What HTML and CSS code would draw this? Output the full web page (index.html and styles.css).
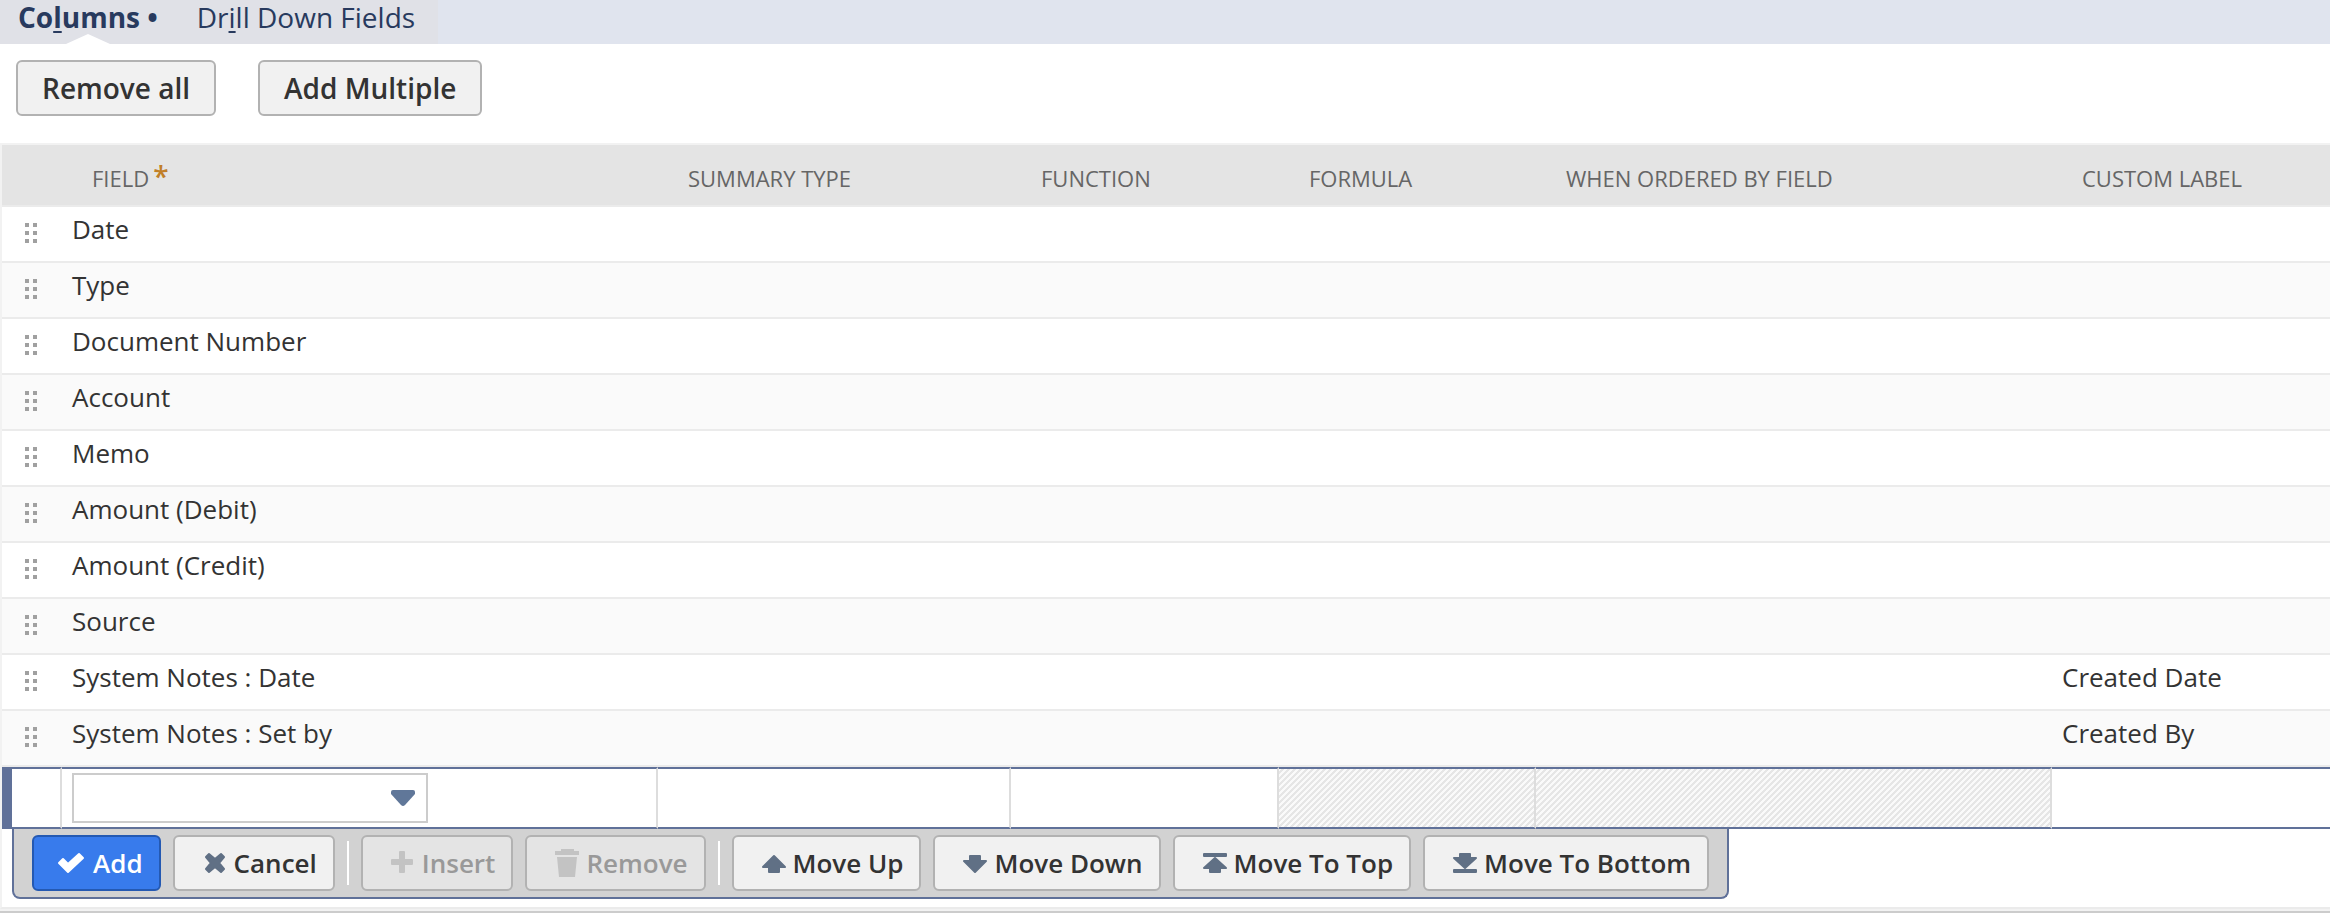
FILE: index.html
```html
<!DOCTYPE html>
<html lang="en">
<head>
    <meta charset="UTF-8">
    <meta name="viewport" content="width=device-width, initial-scale=1.0">
    <title>Saved Search Results</title>
    <link rel="stylesheet" href="styles.css">
</head>
<body>
    <nav class="tab-bar">
        <div class="tabs">
            <a class="tab active" href="#columns">Co<u>l</u>umns •</a>
            <a class="tab" href="#drilldown">Dr<u>i</u>ll Down Fields</a>
        </div>
    </nav>

    <div class="actions">
        <button type="button" class="btn btn-large">Remove all</button>
        <button type="button" class="btn btn-large">Add Multiple</button>
    </div>

    <!-- one grip icon shared by all rows -->
    <svg class="defs" aria-hidden="true">
        <symbol id="grip" viewBox="0 0 12 20">
            <path d="M0 0h4v4H0zM8 0h4v4H8zM0 8h4v4H0zM8 8h4v4H8zM0 16h4v4H0zM8 16h4v4H8z"/>
        </symbol>
    </svg>

    <div class="sublist" id="columns">
        <table class="fields">
            <colgroup>
                <col class="col-grip">
                <col class="col-field">
                <col class="col-summary">
                <col class="col-function">
                <col class="col-formula">
                <col class="col-order">
                <col>
            </colgroup>
            <thead>
                <tr>
                    <th></th>
                    <th>Field<span class="required">*</span></th>
                    <th>Summary Type</th>
                    <th>Function</th>
                    <th>Formula</th>
                    <th>When Ordered By Field</th>
                    <th>Custom Label</th>
                </tr>
            </thead>
            <tbody>
                <tr><td><svg class="grip"><use href="#grip"/></svg></td><td>Date</td><td></td><td></td><td></td><td></td><td></td></tr>
                <tr><td><svg class="grip"><use href="#grip"/></svg></td><td>Type</td><td></td><td></td><td></td><td></td><td></td></tr>
                <tr><td><svg class="grip"><use href="#grip"/></svg></td><td>Document Number</td><td></td><td></td><td></td><td></td><td></td></tr>
                <tr><td><svg class="grip"><use href="#grip"/></svg></td><td>Account</td><td></td><td></td><td></td><td></td><td></td></tr>
                <tr><td><svg class="grip"><use href="#grip"/></svg></td><td>Memo</td><td></td><td></td><td></td><td></td><td></td></tr>
                <tr><td><svg class="grip"><use href="#grip"/></svg></td><td>Amount (Debit)</td><td></td><td></td><td></td><td></td><td></td></tr>
                <tr><td><svg class="grip"><use href="#grip"/></svg></td><td>Amount (Credit)</td><td></td><td></td><td></td><td></td><td></td></tr>
                <tr><td><svg class="grip"><use href="#grip"/></svg></td><td>Source</td><td></td><td></td><td></td><td></td><td></td></tr>
                <tr><td><svg class="grip"><use href="#grip"/></svg></td><td>System Notes : Date</td><td></td><td></td><td></td><td></td><td>Created Date</td></tr>
                <tr><td><svg class="grip"><use href="#grip"/></svg></td><td>System Notes : Set by</td><td></td><td></td><td></td><td></td><td>Created By</td></tr>
                <tr class="edit-row">
                    <td></td>
                    <td>
                        <div class="dropdown">
                            <select name="field" aria-label="Field"><option></option></select>
                            <svg class="arrow" viewBox="0 0 24 16"><path d="M2 0h20q2 0 2 2v2L14 15q-2 2-4 0L0 4V2q0-2 2-2z"/></svg>
                        </div>
                    </td>
                    <td></td>
                    <td></td>
                    <td class="disabled"></td>
                    <td class="disabled"></td>
                    <td></td>
                </tr>
            </tbody>
        </table>

        <div class="toolbar">
            <button type="button" class="btn primary">
                <svg class="icon" viewBox="0 0 30 30"><path d="M0 15l4-4 5 5L20 6l4 4L9 24z"/></svg>Add
            </button>
            <button type="button" class="btn">
                <svg class="icon" viewBox="0 0 30 30"><path d="M9 6l6 5 6-5 3 3-5 6 5 6-3 3-6-5-6 5-3-3 5-6-5-6z"/></svg>Cancel
            </button>
            <span class="separator"></span>
            <button type="button" class="btn" disabled>
                <svg class="icon" viewBox="0 0 30 30"><path d="M12 4h4v8h8v4h-8v8h-4v-8H4v-4h8z"/></svg>Insert
            </button>
            <button type="button" class="btn" disabled>
                <svg class="icon trash" viewBox="0 0 30 30"><path d="M9 1h13v2h5v4H3V3h6zM5 9h20l-2 20H7z"/></svg>Remove
            </button>
            <span class="separator"></span>
            <button type="button" class="btn">
                <svg class="icon" viewBox="0 0 30 30"><path d="M15 8l11 11h-6v5H10v-5H4z"/></svg>Move Up
            </button>
            <button type="button" class="btn">
                <svg class="icon" viewBox="0 0 30 30"><path d="M15 24l11-11h-6V8H10v5H4z"/></svg>Move Down
            </button>
            <button type="button" class="btn">
                <svg class="icon" viewBox="0 0 30 30"><path d="M4 6h22v2H4zM15 10l11 10h-6v4H10v-4H4z"/></svg>Move To Top
            </button>
            <button type="button" class="btn">
                <svg class="icon" viewBox="0 0 30 30"><path d="M4 22h22v2H4zM15 20L4 10h6V6h10v4h6z"/></svg>Move To Bottom
            </button>
        </div>
    </div>
</body>
</html>
```

FILE: styles.css
```css
* {
    box-sizing: border-box;
}

body {
    margin: 0;
    background-color: #fff;
    color: #333;
    font-family: "Open Sans", sans-serif;
    font-size: 26px;
    line-height: 36px;
    border-bottom: 2px solid #ccc;
}

/* tabs */
.tab-bar {
    display: flex;
    height: 44px;
    background-color: #e0e4ee;
}

.tabs {
    display: flex;
    gap: 39px;
    padding: 0 23px 0 18px;
    background-color: #e0e1e7;
}

.tab {
    position: relative;
    color: #283a5e;
    font-size: 28px;
    line-height: 34px;
    text-decoration: none;
}

.tab u {
    text-underline-offset: 3px;
    text-decoration-thickness: 2px;
}

.tab.active {
    font-weight: bold;
}

.tab.active::after {
    content: "";
    position: absolute;
    left: 50%;
    bottom: 0;
    margin-left: -22px;
    border: 22px solid transparent;
    border-top: 0;
    border-bottom: 10px solid #fff;
}

/* buttons */
.btn {
    display: flex;
    align-items: center;
    gap: 4px;
    height: 56px;
    padding: 0 16px 0 25px;
    border: 2px solid #b2b2b2;
    border-radius: 6px;
    background-color: #f1f1f1;
    color: #333;
    font-family: inherit;
    font-size: 26px;
    font-weight: 600;
    white-space: nowrap;
    cursor: pointer;
}

.btn-large {
    padding: 0 24px;
    font-size: 28px;
}

.btn.primary {
    border-color: #2459b2;
    background-color: #387bec;
    color: #fff;
}

.btn:disabled {
    background-color: #e4e4e4;
    color: #999;
    cursor: default;
}

.icon {
    width: 30px;
    height: 30px;
    overflow: visible;
    color: #607085;
    fill: currentColor;
    stroke: currentColor;
    stroke-width: 2;
    stroke-linejoin: round;
}

.icon.trash {
    stroke: none;
}

.primary .icon {
    color: #fff;
}

.btn:disabled .icon {
    color: #c3c3c3;
}

.actions {
    display: flex;
    gap: 42px;
    padding: 16px 16px 27px;
}

/* list of columns */
.defs {
    display: none;
}

.sublist {
    padding-bottom: 8px;
    border-top: 2px solid #f2f2f2;
    border-left: 2px solid #f2f2f2;
    border-bottom: 2px solid #ebebeb;
    box-shadow: 0 2px #f2f2f2;
    margin-bottom: 2px;
}

.fields {
    width: 100%;
    table-layout: fixed;
    border-spacing: 0;
}

.col-grip { width: 60px; }
.col-field { width: 596px; }
.col-summary { width: 353px; }
.col-function { width: 268px; }
.col-formula { width: 257px; }
.col-order { width: 516px; }

th {
    height: 62px;
    padding: 6px 0 0 30px;
    border-bottom: 2px solid #ebebeb;
    background-color: #e4e4e4;
    color: #666;
    font-size: 22px;
    font-weight: normal;
    line-height: 30px;
    text-align: left;
    text-transform: uppercase;
}

.required {
    margin-left: 4px;
    color: #c17f27;
    font-size: 28px;
    font-weight: 600;
    line-height: 22px;
}

td {
    height: 56px;
    padding: 4px 10px 0;
    border-bottom: 2px solid #ebebeb;
    vertical-align: top;
}

tbody tr:nth-child(even) td {
    background-color: #fafafa;
}

.grip {
    display: block;
    width: 12px;
    height: 20px;
    margin: 12px 0 0 13px;
    fill: #a0a0a0;
}

.edit-row td {
    height: 62px;
    padding: 4px 10px;
    border-top: 2px solid #607199;
    border-bottom: 2px solid #607199;
    border-right: 2px solid #ddd;
}

.edit-row td:first-child {
    border-left: 10px solid #607199;
}

.edit-row td:last-child {
    border-right: 0;
}

.edit-row .disabled {
    background-image: linear-gradient(135deg, #fafafa 25%, #e6e6e6 25%, #e6e6e6 50%, #fafafa 50%, #fafafa 75%, #e6e6e6 75%);
    background-size: 6px 6px;
}

.dropdown {
    position: relative;
    width: 356px;
}

.dropdown select {
    display: block;
    width: 100%;
    height: 50px;
    padding: 0 44px 0 10px;
    border: 2px solid #ccc;
    border-radius: 0;
    background-color: #fff;
    appearance: none;
    font: inherit;
}

.arrow {
    position: absolute;
    top: 17px;
    right: 13px;
    width: 24px;
    height: 16px;
    fill: #607799;
    pointer-events: none;
}

/* row actions */
.toolbar {
    display: flex;
    align-items: center;
    gap: 12px;
    width: fit-content;
    margin-left: 10px;
    padding: 6px 18px;
    border: 2px solid #607199;
    border-top: 0;
    border-radius: 0 0 8px 8px;
    background-color: #d2d2d2;
}

.separator {
    width: 2px;
    height: 44px;
    background-color: #fff;
}
```
